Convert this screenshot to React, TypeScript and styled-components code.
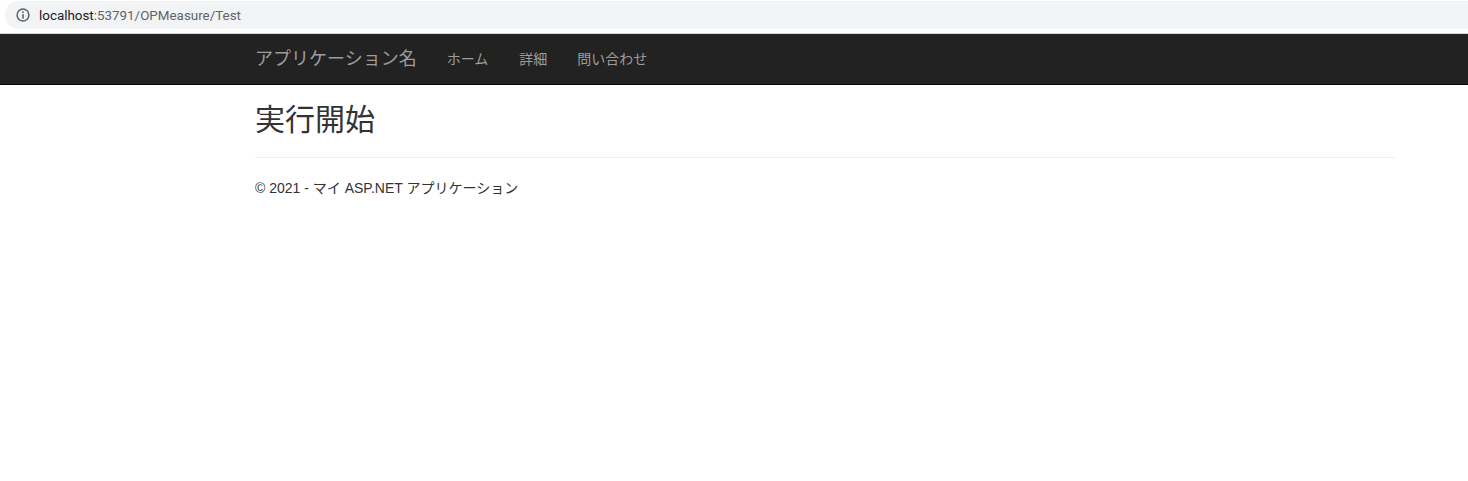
import React from "react";
import styled, { createGlobalStyle } from "styled-components";

const Global = createGlobalStyle`
  html, body { margin: 0; padding: 0; background: #fff; }
  body {
    font-family: "Liberation Sans", "Noto Sans CJK JP", sans-serif;
    font-size: 14px;
    line-height: 20px;
    color: #333;
  }
`;

const BrowserBar = styled.div`
  height: 34px;
  padding: 1px 0 4px 5px;
  box-sizing: border-box;
  background: #fff;
  border-bottom: 1px solid #d8d8d8;
`;

const AddressPill = styled.div`
  height: 28px;
  display: flex;
  align-items: center;
  gap: 9px;
  padding-left: 11px;
  background: #f1f3f4;
  border-radius: 14px 0 0 14px;
  font-family: "Roboto", "Liberation Sans", sans-serif;
  font-size: 13.4px;
  color: #5f6368;
`;

const UrlText = styled.span`
  padding-top: 1px;
`;

const Host = styled.span`
  color: #202124;
`;

const Navbar = styled.nav`
  height: 50px;
  background: #222;
  border-bottom: 1px solid #080808;
`;

const Container = styled.div`
  width: 1140px;
  margin-left: 255px;
`;

const NavRow = styled(Container)`
  display: flex;
  align-items: center;
  height: 50px;
`;

const Brand = styled.a`
  font-size: 18px;
  color: #9d9d9d;
  margin-right: 15px;
`;

const NavList = styled.div`
  display: flex;
  align-items: center;
`;

const NavLink = styled.a`
  padding: 0 15px;
  color: #9d9d9d;
  font-size: 14px;

  &:first-of-type {
    padding-right: 16px;
  }
`;

const Title = styled.h2`
  margin: 18px 0 10px;
  font-size: 30px;
  font-weight: 400;
  line-height: 33px;
  color: #333;
`;

const Rule = styled.hr`
  margin: 21px 0 20px;
  border: 0;
  border-top: 1px solid #eee;
`;

const Footer = styled.footer`
  margin: 0;
  font-size: 14px;
`;

const InfoIcon = () => (
  <svg width="14" height="14" viewBox="0 0 14 14" fill="none" aria-hidden="true">
    <circle cx="7" cy="7" r="5.9" stroke="#5f6368" strokeWidth="1.5" />
    <rect x="6.2" y="3.4" width="1.6" height="1.6" fill="#5f6368" />
    <rect x="6.2" y="6" width="1.6" height="4.6" fill="#5f6368" />
  </svg>
);

export default function App() {
  return (
    <>
      <Global />
      <BrowserBar>
        <AddressPill>
          <InfoIcon />
          <UrlText>
            <Host>localhost</Host>:53791/OPMeasure/Test
          </UrlText>
        </AddressPill>
      </BrowserBar>
      <Navbar>
        <NavRow>
          <Brand>アプリケーション名</Brand>
          <NavList>
            <NavLink>ホーム</NavLink>
            <NavLink>詳細</NavLink>
            <NavLink>問い合わせ</NavLink>
          </NavList>
        </NavRow>
      </Navbar>
      <Container>
        <Title>実行開始</Title>
        <Rule />
        <Footer>© 2021 - マイ ASP.NET アプリケーション</Footer>
      </Container>
    </>
  );
}
